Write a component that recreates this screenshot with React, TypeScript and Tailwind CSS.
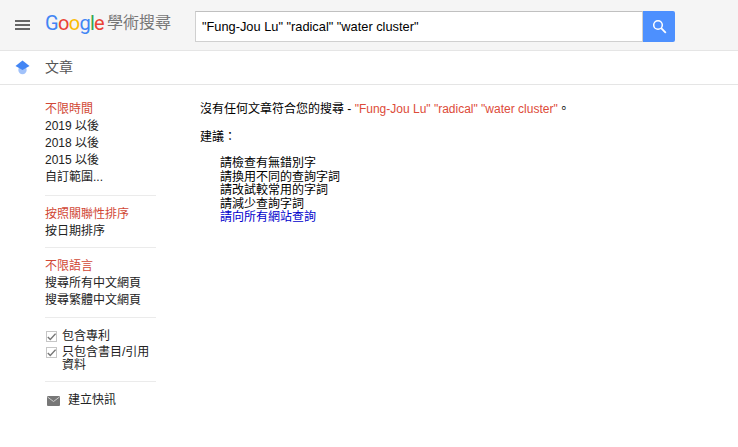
const FONT = "font-['Liberation_Sans','Noto_Sans_CJK_TC',sans-serif]";

function GoogleLogo() {
  return (
    <span className="font-['Roboto','Liberation_Sans',sans-serif] text-[20px] leading-none tracking-[-0.7px]">
      <span className="text-[#4285f4]">G</span>
      <span className="text-[#ea4335]">o</span>
      <span className="text-[#fbbc05]">o</span>
      <span className="text-[#4285f4]">g</span>
      <span className="text-[#34a853]">l</span>
      <span className="text-[#ea4335]">e</span>
    </span>
  );
}

function Check() {
  return (
    <span className="mt-[1px] ml-[1px] flex h-[11px] w-[11px] shrink-0 items-center justify-center border border-[#c6c6c6] bg-white">
      <svg width="11" height="10" viewBox="0 0 11 10">
        <path d="M1 5 L4 8 L10.5 1" fill="none" stroke="#777" strokeWidth="1.8" />
      </svg>
    </span>
  );
}

export default function App() {
  return (
    <div className={`${FONT} h-[447px] w-[738px] overflow-hidden bg-white text-[12px] text-[#222]`}>
      {/* Header */}
      <div className="flex h-[51px] items-start border-b border-[#e5e5e5] bg-[#f5f5f5] pt-[11px]">
        <div className="mt-[9px] ml-[15px] flex w-[15px] flex-col gap-[2px]">
          <span className="h-[2px] bg-[#666]" />
          <span className="h-[2px] bg-[#666]" />
          <span className="h-[2px] bg-[#666]" />
        </div>
        <div className="mt-[2px] ml-[15px] flex w-[150px] items-center">
          <GoogleLogo />
          <span className="ml-[3px] text-[16px] leading-[20px] text-[#777]">學術搜尋</span>
        </div>
        <div className="flex h-[31px] w-[448px] items-center border border-[#d0d0d0] border-t-[#c0c0c0] bg-white pl-[6px] text-[12.8px] text-black">
          "Fung-Jou Lu" "radical" "water cluster"
        </div>
        <div className="flex h-[31px] w-[32px] items-center justify-center rounded-r-[2px] bg-[#4d90fe]">
          <svg width="15" height="15" viewBox="0 0 15 15">
            <circle cx="6" cy="6" r="4.3" fill="none" stroke="#fff" strokeWidth="1.5" />
            <path d="M9.2 9.2 L13.8 13.8" stroke="#fff" strokeWidth="1.8" />
          </svg>
        </div>
      </div>

      {/* Sub bar */}
      <div className="flex h-[34px] items-center border-b border-[#e5e5e5]">
        <svg className="ml-[15px]" width="15" height="15" viewBox="0 0 15 15">
          <circle cx="7.5" cy="10" r="4.2" fill="#a1c2fa" />
          <path d="M0.5 6 L7.5 0.5 L14.5 6 L7.5 10 Z" fill="#4285f4" />
        </svg>
        <span className="ml-[15px] text-[14px] text-[#555]">文章</span>
      </div>

      <div className="flex">
        {/* Sidebar */}
        <div className="ml-[45px] w-[155px] pt-[16px] leading-[17px]">
          <div className="text-[#d14836]">不限時間</div>
          <div>2019 以後</div>
          <div>2018 以後</div>
          <div>2015 以後</div>
          <div>自訂範圍...</div>
          <div className="mt-[9px] mb-[10px] h-px w-[111px] bg-[#ebebeb]" />
          <div className="text-[#d14836]">按照關聯性排序</div>
          <div>按日期排序</div>
          <div className="mt-[7px] mb-[10px] h-px w-[111px] bg-[#ebebeb]" />
          <div className="text-[#d14836]">不限語言</div>
          <div>搜尋所有中文網頁</div>
          <div>搜尋繁體中文網頁</div>
          <div className="mt-[8px] h-px w-[111px] bg-[#ebebeb]" />
          <div className="mt-[12px] flex gap-[5px] leading-[13px]">
            <Check />
            <span>包含專利</span>
          </div>
          <div className="mt-[3px] flex w-[111px] gap-[5px] leading-[13px]">
            <Check />
            <span>只包含書目/引用資料</span>
          </div>
          <div className="mt-[9px] mb-[10px] h-px w-[111px] bg-[#ebebeb]" />
          <div className="flex items-center gap-[8px]">
            <svg className="ml-[2px]" width="13" height="10" viewBox="0 0 13 10">
              <rect width="13" height="10" rx="1" fill="#777" />
              <path d="M0.5 1 L6.5 5.5 L12.5 1" fill="none" stroke="#ccc" strokeWidth="1" />
            </svg>
            <span>建立快訊</span>
          </div>
        </div>

        {/* Results */}
        <div className="pt-[16px] text-black">
          <div className="leading-[17px]">
            沒有任何文章符合您的搜尋 - <span className="text-[#dd4b39]">"Fung-Jou Lu" "radical" "water cluster"</span>。
          </div>
          <div className="mt-[11px] leading-[17px]">建議：</div>
          <div className="mt-[11px] pl-[20px] leading-[13.6px]">
            <div>請檢查有無錯別字</div>
            <div>請換用不同的查詢字詞</div>
            <div>請改試較常用的字詞</div>
            <div>請減少查詢字詞</div>
            <div className="text-[#0000cc]">請向所有網站查詢</div>
          </div>
        </div>
      </div>
    </div>
  );
}
